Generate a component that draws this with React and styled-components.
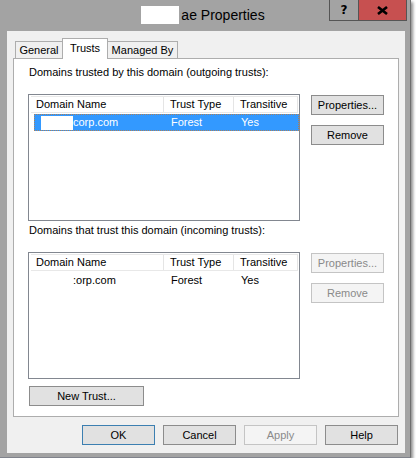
import styled, { createGlobalStyle } from "styled-components";

const GlobalStyle = createGlobalStyle`
  body {
    margin: 0;
    background: #ffffff;
    font-family: "Liberation Sans", Arial, sans-serif;
    font-size: 11px;
    color: #000;
  }
`;

const Window = styled.div`
  width: 411px;
  height: 458px;
  box-sizing: border-box;
  background: #a3a3a3;
  border-right: 1px solid #6e6e6e;
  border-bottom: 1px solid #80838c;
  box-shadow: 2px 2px 3px rgba(0, 0, 0, 0.45);
  display: flex;
  flex-direction: column;
`;

const TitleBar = styled.div`
  height: 31px;
  display: grid;
  grid-template-columns: 1fr auto 1fr;
  align-items: center;
`;

const Title = styled.div`
  grid-column: 2;
  display: flex;
  align-items: center;
  gap: 2px;
  font-size: 14px;
  color: #000;
  margin-right: 4px;
  padding-bottom: 1px;
`;

const Redacted = styled.span`
  display: inline-block;
  width: ${(p) => p.$w}px;
  height: ${(p) => p.$h}px;
  background: #ffffff;
  align-self: ${(p) => p.$align || "center"};
`;

const CaptionButtons = styled.div`
  grid-column: 3;
  justify-self: end;
  align-self: start;
  display: flex;
  margin-right: 3px;
`;

const CaptionButton = styled.div`
  width: ${(p) => p.$w}px;
  height: 20px;
  border: 1px solid #555;
  border-top: none;
  margin-left: -1px;
  background: ${(p) => p.$bg};
  display: flex;
  align-items: center;
  justify-content: center;
  font-family: "DejaVu Sans", sans-serif;
  font-weight: bold;
  font-size: 12px;
`;

const Content = styled.div`
  flex: 1;
  margin: 0 5px 4px 7px;
  background: #f0f0f0;
  padding: 7px 6px 8px 6px;
  display: flex;
  flex-direction: column;
`;

const TabStrip = styled.div`
  display: flex;
  align-items: flex-end;
  margin-left: 2px;
  margin-bottom: -1px;
  position: relative;
  z-index: 1;
`;

const Tab = styled.div`
  width: ${(p) => p.$w}px;
  height: ${(p) => (p.$active ? 21 : 18)}px;
  box-sizing: border-box;
  border: 1px solid #adadad;
  border-bottom: ${(p) => (p.$active ? "none" : "1px solid #adadad")};
  margin-right: -1px;
  background: ${(p) => (p.$active ? "#ffffff" : "#f0f0f0")};
  display: flex;
  align-items: center;
  justify-content: center;
  padding-bottom: ${(p) => (p.$active ? 3 : 0)}px;
`;

const Panel = styled.div`
  border: 1px solid #adadad;
  background: #ffffff;
  padding: 7px 14px 10px 14px;
  display: flex;
  flex-direction: column;
`;

const Label = styled.div`
  line-height: 13px;
  margin-left: 1px;
  margin-top: ${(p) => p.$mt || 0}px;
`;

const ListRow = styled.div`
  display: flex;
  gap: 11px;
  margin-top: 15px;
`;

const ListView = styled.div`
  width: 272px;
  height: 127px;
  box-sizing: border-box;
  border: 1px solid #828790;
  background: #fff;
  padding: 1px 1px 0 2px;
`;

const Header = styled.div`
  display: grid;
  grid-template-columns: 133px 70px 64px;
  height: 17px;
  box-sizing: border-box;
  border: 1px solid #e8e8e8;
  border-left: none;
`;

const HeaderCell = styled.div`
  border-right: 1px solid #e5e5e5;
  padding-left: ${(p) => (p.$first ? 5 : 6)}px;
  line-height: 15px;
`;

const Row = styled.div`
  display: grid;
  grid-template-columns: 130px 70px 1fr;
  margin: 1px 0 0 3px;
  width: 265px;
  height: 17px;
  box-sizing: border-box;
  border: 1px dotted ${(p) => (p.$selected ? "#a9805c" : "transparent")};
  background: ${(p) => (p.$selected ? "#3399ff" : "transparent")};
  color: ${(p) => (p.$selected ? "#ffffff" : "#000000")};
`;

const Cell = styled.div`
  display: flex;
  align-items: center;
  padding-left: ${(p) => p.$pl || 6}px;
  line-height: 15px;
  white-space: nowrap;
`;

const SideButtons = styled.div`
  display: flex;
  flex-direction: column;
  gap: 10px;
  padding-top: 1px;
`;

const Button = styled.div`
  width: ${(p) => p.$w || 73}px;
  height: 20px;
  box-sizing: border-box;
  border: 1px solid ${(p) => (p.$default ? "#3c7fb1" : p.$disabled ? "#c4c4c4" : "#8c8c8c")};
  background: ${(p) => (p.$disabled ? "#f4f4f4" : "#e1e1e1")};
  color: ${(p) => (p.$disabled ? "#8a8a8a" : "#000")};
  display: flex;
  align-items: center;
  justify-content: center;
`;

const NewTrustRow = styled.div`
  margin-top: 7px;
  margin-left: 1px;
`;

const Footer = styled.div`
  display: flex;
  justify-content: flex-end;
  gap: 8px;
  margin-top: 8px;
  margin-right: 1px;
`;

const columns = ["Domain Name", "Trust Type", "Transitive"];

function TrustList({ rows }) {
  return (
    <ListView>
      <Header>
        {columns.map((c, i) => (
          <HeaderCell key={c} $first={i === 0}>
            {c}
          </HeaderCell>
        ))}
      </Header>
      {rows.map((r, i) => (
        <Row key={i} $selected={r.selected}>
          <Cell $pl={0}>
            <Redacted $w={32} $h={14} $align={r.selected ? "flex-end" : "center"} />
            {r.name}
          </Cell>
          <Cell>{r.type}</Cell>
          <Cell>{r.transitive}</Cell>
        </Row>
      ))}
    </ListView>
  );
}

export default function App() {
  return (
    <>
      <GlobalStyle />
      <Window>
        <TitleBar>
          <Title>
            <Redacted $w={38} $h={18} />
            <span>ae Properties</span>
          </Title>
          <CaptionButtons>
            <CaptionButton $w={28} $bg="#a3a3a3">?</CaptionButton>
            <CaptionButton $w={47} $bg="#c75050">
              <svg width="11" height="9" viewBox="0 0 11 9">
                <path d="M1 1 L10 8 M10 1 L1 8" stroke="#000" strokeWidth="2.6" />
              </svg>
            </CaptionButton>
          </CaptionButtons>
        </TitleBar>
        <Content>
          <TabStrip>
            <Tab $w={48}>General</Tab>
            <Tab $w={46} $active>
              Trusts
            </Tab>
            <Tab $w={71}>Managed By</Tab>
          </TabStrip>
          <Panel>
            <Label>Domains trusted by this domain (outgoing trusts):</Label>
            <ListRow>
              <TrustList
                rows={[{ name: "corp.com", type: "Forest", transitive: "Yes", selected: true }]}
              />
              <SideButtons>
                <Button>Properties...</Button>
                <Button>Remove</Button>
              </SideButtons>
            </ListRow>
            <Label $mt={3}>Domains that trust this domain (incoming trusts):</Label>
            <ListRow>
              <TrustList rows={[{ name: ":orp.com", type: "Forest", transitive: "Yes" }]} />
              <SideButtons>
                <Button $disabled>Properties...</Button>
                <Button $disabled>Remove</Button>
              </SideButtons>
            </ListRow>
            <NewTrustRow>
              <Button $w={115}>New Trust...</Button>
            </NewTrustRow>
          </Panel>
          <Footer>
            <Button $default>OK</Button>
            <Button>Cancel</Button>
            <Button $disabled>Apply</Button>
            <Button>Help</Button>
          </Footer>
        </Content>
      </Window>
    </>
  );
}
